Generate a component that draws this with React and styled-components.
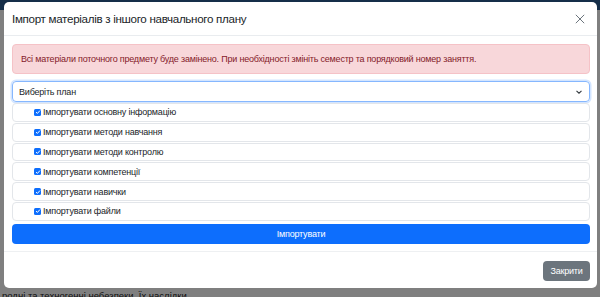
import React from "react";
import styled, { createGlobalStyle } from "styled-components";

const GlobalStyle = createGlobalStyle`
  html, body {
    margin: 0;
    padding: 0;
    width: 600px;
    height: 297px;
    overflow: hidden;
    font-family: "Liberation Sans", Arial, sans-serif;
  }
`;

const Page = styled.div`
  position: relative;
  width: 600px;
  height: 297px;
  background: #ffffff;
  overflow: hidden;
`;

const Navbar = styled.div`
  height: 10px;
  background: #2b5d92;
`;

const PageBody = styled.div`
  padding: 277px 0 0 2px;
  font-size: 9.5px;
  line-height: 18px;
  color: #222;
`;

const Backdrop = styled.div`
  position: absolute;
  inset: 0;
  background: rgba(0, 0, 0, 0.5);
`;

const Dialog = styled.div`
  position: absolute;
  top: 2px;
  left: 4px;
  width: 593px;
  height: 286px;
  background: #fff;
  border-radius: 5px;
  display: flex;
  flex-direction: column;
`;

const Header = styled.div`
  display: flex;
  align-items: center;
  justify-content: space-between;
  height: 33px;
  padding: 0 8px;
  border-bottom: 1px solid #e9ecef;
`;

const Title = styled.h5`
  margin: 0;
  font-size: 11.6px;
  letter-spacing: -0.3px;
  font-weight: 400;
  color: #212529;
`;

const CloseButton = styled.button`
  display: flex;
  align-items: center;
  justify-content: center;
  width: 12px;
  height: 12px;
  margin-right: 3px;
  padding: 0;
  border: none;
  background: none;
  color: #6c757d;
`;

const Body = styled.div`
  display: flex;
  flex-direction: column;
  padding: 8px 7px 0 8px;
`;

const Alert = styled.div`
  display: flex;
  align-items: center;
  height: 28px;
  padding: 0 8px;
  background: #f8d7da;
  border: 1px solid #f5c2c7;
  border-radius: 4px;
  color: #842029;
  font-size: 9px;
  letter-spacing: -0.2px;
`;

const Select = styled.div`
  display: flex;
  align-items: center;
  justify-content: space-between;
  height: 19px;
  margin-top: 7px;
  padding: 0 6px;
  border: 1px solid #86b7fe;
  border-radius: 4px;
  box-shadow: 0 0 0 1.5px rgba(13, 110, 253, 0.18);
  font-size: 9px;
  letter-spacing: -0.2px;
  color: #212529;
`;

const OptionList = styled.div`
  display: flex;
  flex-direction: column;
  gap: 1px;
  margin-top: 1px;
`;

const OptionRow = styled.label`
  display: flex;
  align-items: center;
  gap: 2px;
  height: 16.8px;
  padding-left: 21px;
  border: 1px solid #e3e6ea;
  border-radius: 4px;
  font-size: 9px;
  letter-spacing: -0.2px;
  color: #212529;
`;

const Check = styled.span`
  display: inline-flex;
  align-items: center;
  justify-content: center;
  width: 7px;
  height: 7px;
  border-radius: 1.5px;
  background: #0d6efd;
`;

const PrimaryButton = styled.button`
  height: 20px;
  margin-top: 3px;
  border: none;
  border-radius: 4px;
  background: #0d6efd;
  color: #fff;
  font-family: inherit;
  font-size: 9px;
  letter-spacing: -0.2px;
`;

const Footer = styled.div`
  display: flex;
  justify-content: flex-end;
  margin-top: 7px;
  padding: 9px 7px 0 8px;
  border-top: 1px solid #eef0f2;
`;

const SecondaryButton = styled.button`
  width: 47px;
  height: 20px;
  border: none;
  border-radius: 4px;
  background: #6c757d;
  color: #fff;
  font-family: inherit;
  font-size: 9px;
  letter-spacing: -0.2px;
`;

const options = [
  "Імпортувати основну інформацію",
  "Імпортувати методи навчання",
  "Імпортувати методи контролю",
  "Імпортувати компетенції",
  "Імпортувати навички",
  "Імпортувати файли",
];

export default function App() {
  return (
    <>
      <GlobalStyle />
      <Page>
        <Navbar />
        <PageBody>родні та техногенні небезпеки. Їх наслідки</PageBody>
        <Backdrop />
        <Dialog>
          <Header>
            <Title>Імпорт матеріалів з іншого навчального плану</Title>
            <CloseButton aria-label="Close">
              <svg width="10" height="10" viewBox="0 0 10 10">
                <path d="M0.8 0.8L9.2 9.2M9.2 0.8L0.8 9.2" stroke="currentColor" strokeWidth="1" />
              </svg>
            </CloseButton>
          </Header>
          <Body>
            <Alert>
              Всі матеріали поточного предмету буде замінено. При необхідності змініть семестр та порядковий номер заняття.
            </Alert>
            <Select>
              <span>Виберіть план</span>
              <svg width="8" height="6" viewBox="0 0 8 6">
                <path d="M1.5 1.8L4 4.2L6.5 1.8" fill="none" stroke="#343a40" strokeWidth="1.1" />
              </svg>
            </Select>
            <OptionList>
              {options.map((o) => (
                <OptionRow key={o}>
                  <Check>
                    <svg width="6" height="6" viewBox="0 0 6 6">
                      <path d="M1 3.1L2.4 4.4L5 1.5" fill="none" stroke="#fff" strokeWidth="1" />
                    </svg>
                  </Check>
                  {o}
                </OptionRow>
              ))}
            </OptionList>
            <PrimaryButton>Імпортувати</PrimaryButton>
          </Body>
          <Footer>
            <SecondaryButton>Закрити</SecondaryButton>
          </Footer>
        </Dialog>
      </Page>
    </>
  );
}
